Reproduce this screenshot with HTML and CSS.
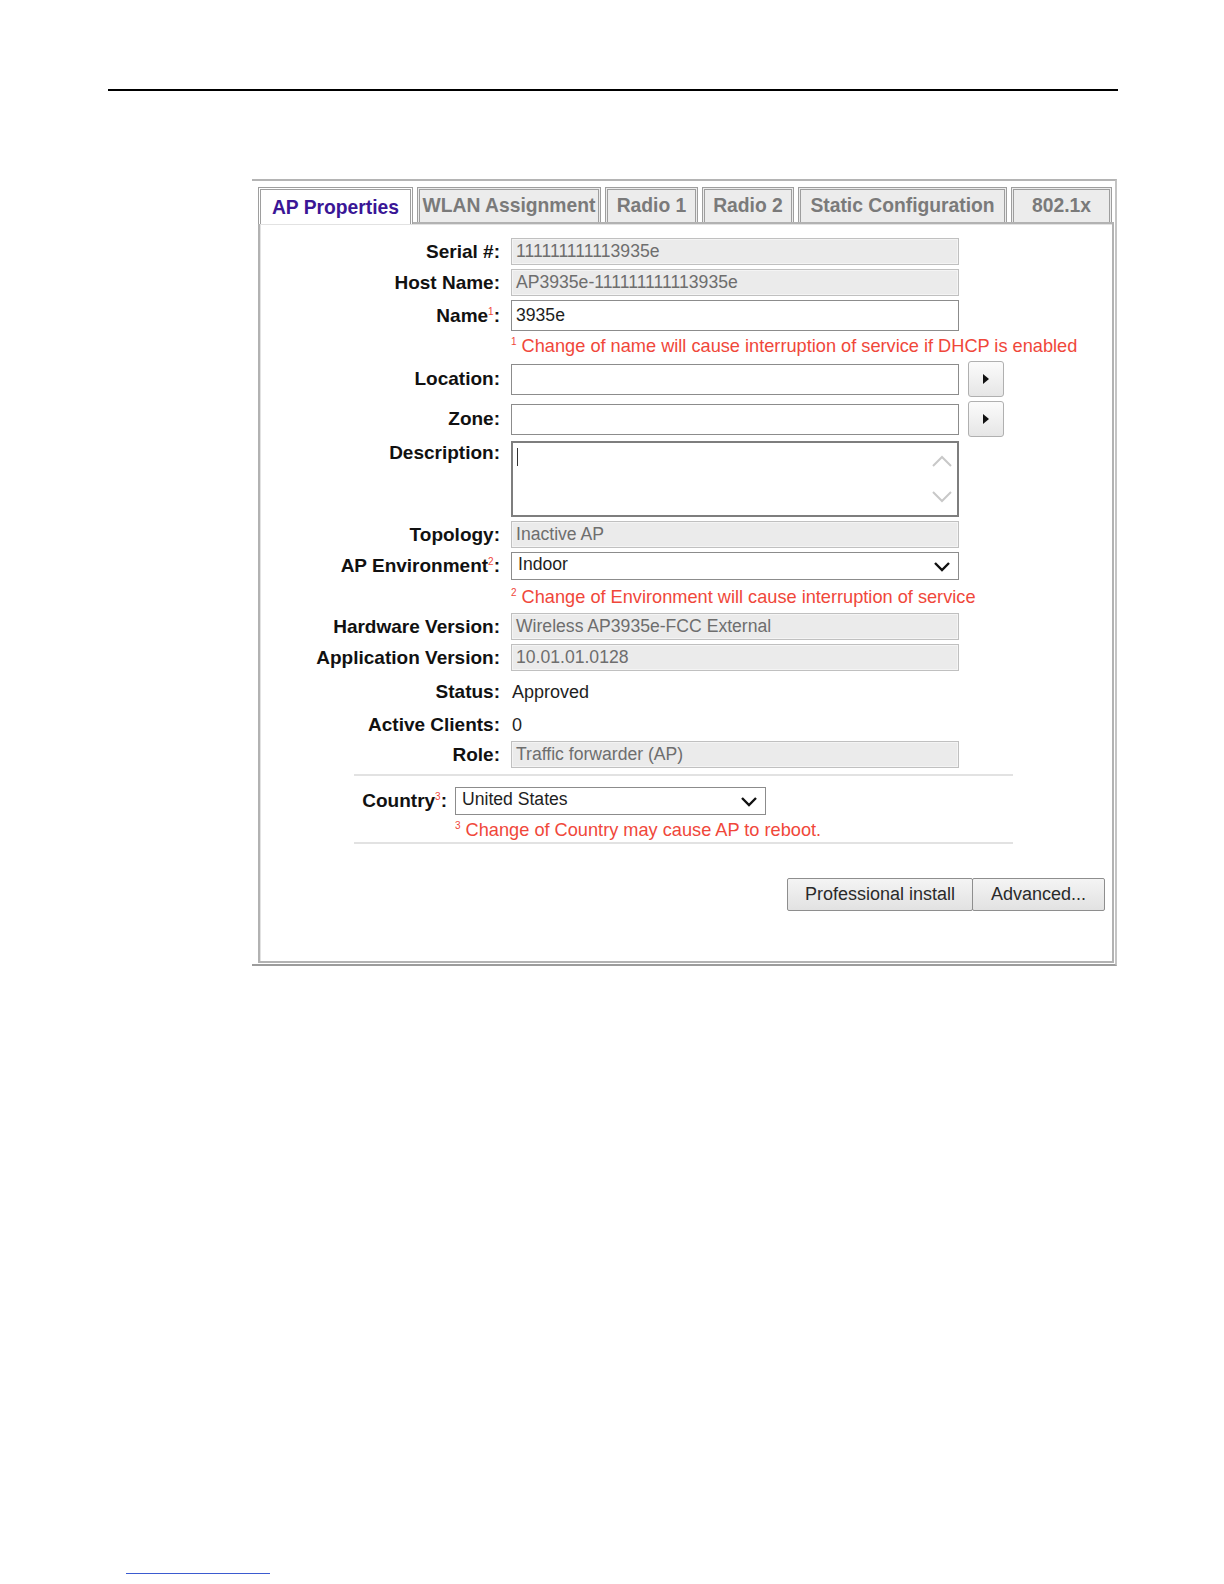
FILE: index.html
```html
<!DOCTYPE html>
<html lang="en">
<head>
    <meta charset="UTF-8">
    <meta name="viewport" content="width=device-width, initial-scale=1.0">
    <title>AP Properties</title>
    <link rel="stylesheet" href="styles.css">
</head>
<body>
    <div class="page">
        <div class="header-rule"></div>

        <div class="shot">
            <div class="tabs">
                <div class="tab active tab-props">AP Properties</div>
                <div class="tab tab-wlan">WLAN Assignment</div>
                <div class="tab tab-radio1">Radio 1</div>
                <div class="tab tab-radio2">Radio 2</div>
                <div class="tab tab-static">Static Configuration</div>
                <div class="tab tab-dot1x">802.1x</div>
            </div>

            <div class="panel">
                <div class="form">
                    <div class="lbl">Serial #:</div>
                    <div class="field ro">111111111113935e</div>
                    <div></div>

                    <div class="lbl">Host Name:</div>
                    <div class="field ro">AP3935e-111111111113935e</div>
                    <div></div>

                    <div class="lbl">Name<sup>1</sup>:</div>
                    <div class="field edit">3935e</div>
                    <div></div>

                    <div></div>
                    <div class="note"><sup>1</sup> Change of name will cause interruption of service if DHCP is enabled</div>
                    <div></div>

                    <div class="lbl">Location:</div>
                    <div class="field edit"></div>
                    <div class="arrow-btn"><span class="tri"></span></div>

                    <div class="lbl">Zone:</div>
                    <div class="field edit"></div>
                    <div class="arrow-btn"><span class="tri"></span></div>

                    <div class="lbl lbl-top">Description:</div>
                    <div class="textarea">
                        <span class="caret"></span>
                        <svg class="scroll" width="24" height="58" viewBox="0 0 24 58">
                            <polyline points="3,16 12,7 21,16" fill="none" stroke="#c8c8c8" stroke-width="2"/>
                            <polyline points="3,42 12,51 21,42" fill="none" stroke="#c8c8c8" stroke-width="2"/>
                        </svg>
                    </div>
                    <div></div>

                    <div class="lbl">Topology:</div>
                    <div class="field ro">Inactive AP</div>
                    <div></div>

                    <div class="lbl">AP Environment<sup>2</sup>:</div>
                    <div class="select">
                        <span>Indoor</span>
                        <svg width="18" height="11" viewBox="0 0 18 11"><polyline points="2,2 9,9 16,2" fill="none" stroke="#111" stroke-width="2.4"/></svg>
                    </div>
                    <div></div>

                    <div></div>
                    <div class="note note-2"><sup>2</sup> Change of Environment will cause interruption of service</div>
                    <div></div>

                    <div class="lbl">Hardware Version:</div>
                    <div class="field ro">Wireless AP3935e-FCC External</div>
                    <div></div>

                    <div class="lbl">Application Version:</div>
                    <div class="field ro">10.01.01.0128</div>
                    <div></div>

                    <div class="lbl">Status:</div>
                    <div class="plain plain-status">Approved</div>
                    <div></div>

                    <div class="lbl">Active Clients:</div>
                    <div class="plain">0</div>
                    <div></div>

                    <div class="lbl">Role:</div>
                    <div class="field ro">Traffic forwarder (AP)</div>
                    <div></div>
                </div>

                <div class="country">
                    <div class="country-row">
                        <div class="lbl">Country<sup>3</sup>:</div>
                        <div class="select select-country">
                            <span>United States</span>
                            <svg width="18" height="11" viewBox="0 0 18 11"><polyline points="2,2 9,9 16,2" fill="none" stroke="#111" stroke-width="2.4"/></svg>
                        </div>
                    </div>
                    <div class="note note-3"><sup>3</sup> Change of Country may cause AP to reboot.</div>
                </div>

                <div class="actions">
                    <button class="btn btn-pro">Professional install</button>
                    <button class="btn btn-adv">Advanced...</button>
                </div>
            </div>
        </div>

        <div class="foot-rule"></div>
    </div>
</body>
</html>
```

FILE: styles.css
```css
body {
    margin: 0;
    background: #ffffff;
    font-family: "Liberation Sans", Arial, sans-serif;
    color: #111111;
}
.page {
    padding-top: 89px;
}
.header-rule {
    margin-left: 108px;
    width: 1010px;
    height: 2px;
    background: #000000;
}

/* screenshot frame */
.shot {
    margin: 88px 0 0 252px;
    width: 857px;
    padding: 4px 0 1px 6px;
    border-top: 2px solid #b4b4b4;
    border-right: 2px solid #c4c4c4;
    border-bottom: 2px solid #9c9c9c;
}
.tabs {
    display: flex;
    gap: 4px;
    align-items: flex-end;
    height: 37px;
}
.tab {
    height: 35px;
    box-sizing: border-box;
    border: 3px double #9e9e9e;
    border-bottom: none;
    background: #ececec;
    color: #7a7a7a;
    font-weight: bold;
    font-size: 19.3px;
    line-height: 31px;
    text-align: center;
    white-space: nowrap;
}
.tab.active {
    height: 37px;
    background: #ffffff;
    color: #3a1696;
    position: relative;
    margin-bottom: -2px;
    line-height: 36px;
}
.tab-props { width: 155px; }
.tab-wlan { width: 184px; }
.tab-radio1 { width: 93px; }
.tab-radio2 { width: 92px; }
.tab-static { width: 209px; }
.tab-dot1x { width: 101px; }

.panel {
    width: 856px;
    box-sizing: border-box;
    border: 2px solid #b2b2b2;
    box-shadow: inset 1px 1px 0 #e2e2e2;
    background: #ffffff;
    padding: 14px 0 50px 0;
}

/* property grid */
.form {
    display: grid;
    grid-template-columns: 240px 448px 36px;
    column-gap: 11px;
    row-gap: 4px;
    align-items: center;
}
.lbl {
    text-align: right;
    font-weight: bold;
    font-size: 19px;
    color: #111111;
    white-space: nowrap;
}
.lbl-top {
    align-self: start;
    padding-top: 1px;
}
.lbl sup,
.note sup {
    color: #f0473a;
    font-size: 10px;
    font-weight: normal;
    vertical-align: 7px;
    line-height: 0;
}
.field {
    box-sizing: border-box;
    font-size: 17.6px;
    padding-left: 4px;
    white-space: nowrap;
}
.field.ro {
    height: 27px;
    line-height: 25px;
    background: #ebebeb;
    border: 1px solid #c0c0c0;
    box-shadow: inset 0 0 0 1px #f4f4f4;
    color: #6e6e6e;
}
.field.edit {
    height: 31px;
    line-height: 29px;
    background: #ffffff;
    border: 1px solid #8c8c8c;
    color: #1e1e1e;
}
.note {
    color: #f0473a;
    font-size: 18.2px;
    white-space: nowrap;
    height: 22px;
    line-height: 22px;
}
.note-2 {
    height: 23px;
    margin-top: 2px;
}
.plain {
    font-size: 18px;
    color: #1e1e1e;
    height: 24px;
    line-height: 24px;
    padding-left: 1px;
}
.plain-status {
    height: 34px;
    line-height: 34px;
}
.arrow-btn {
    width: 36px;
    height: 36px;
    margin-left: -2px;
    box-sizing: border-box;
    border: 1px solid #b0b0b0;
    border-radius: 3px;
    background: linear-gradient(#fbfbfb, #e6e6e6);
    display: flex;
    align-items: center;
    justify-content: center;
}
.tri {
    width: 0;
    height: 0;
    border-top: 5px solid transparent;
    border-bottom: 5px solid transparent;
    border-left: 6px solid #111111;
}
.textarea {
    height: 76px;
    box-sizing: border-box;
    border: 2px solid #7e7e7e;
    background: #ffffff;
    position: relative;
}
.caret {
    position: absolute;
    left: 4px;
    top: 5px;
    width: 1px;
    height: 18px;
    background: #333333;
}
.scroll {
    position: absolute;
    right: 3px;
    top: 7px;
}
.select {
    height: 28px;
    box-sizing: border-box;
    border: 1px solid #8c8c8c;
    background: #ffffff;
    display: flex;
    align-items: center;
    justify-content: space-between;
    padding: 0 7px 0 6px;
    font-size: 17.6px;
    color: #1e1e1e;
}
.select span {
    margin-top: -3px;
}

/* country block */
.country {
    margin: 6px 0 0 94px;
    width: 659px;
    border-top: 2px solid #e2e2e2;
    border-bottom: 2px solid #e2e2e2;
    padding: 11px 0 1px 0;
}
.country-row {
    display: flex;
    align-items: center;
    gap: 8px;
}
.country-row .lbl {
    width: 93px;
}
.select-country {
    width: 311px;
}
.note-3 {
    margin-left: 101px;
    margin-top: 4px;
}

.actions {
    display: flex;
    justify-content: flex-end;
    margin: 34px 7px 0 0;
}
.btn {
    height: 33px;
    box-sizing: border-box;
    border: 1px solid #8e8e8e;
    border-radius: 2px;
    background: linear-gradient(#f4f4f4, #e2e2e2);
    font-family: "Liberation Sans", Arial, sans-serif;
    font-size: 18px;
    color: #2a2a2a;
    padding: 0;
}
.btn-pro { width: 186px; }
.btn-adv { width: 133px; margin-left: -1px; }

.foot-rule {
    margin: 607px 0 0 126px;
    width: 144px;
    height: 1px;
    background: #3b5bd0;
}
```
